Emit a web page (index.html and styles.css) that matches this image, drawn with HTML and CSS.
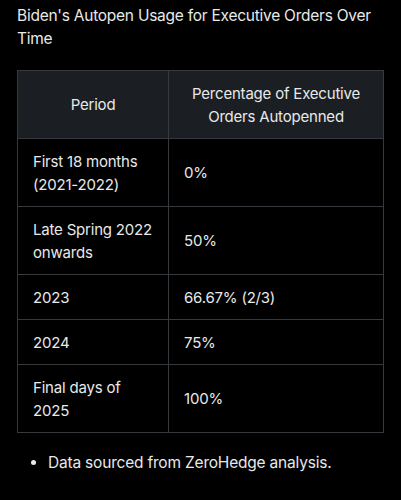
FILE: index.html
```html
<!DOCTYPE html>
<html lang="en">
<head>
    <meta charset="UTF-8">
    <meta name="viewport" content="width=device-width, initial-scale=1.0">
    <title>Autopen Usage</title>
    <link rel="stylesheet" href="styles.css">
</head>
<body>
    <div class="post">
        <p class="title">Biden's Autopen Usage for Executive Orders Over Time</p>

        <table class="data-table">
            <thead>
                <tr>
                    <th class="col-period">Period</th>
                    <th>Percentage of Executive Orders Autopenned</th>
                </tr>
            </thead>
            <tbody>
                <tr>
                    <td>First 18 months (2021-2022)</td>
                    <td>0%</td>
                </tr>
                <tr>
                    <td>Late Spring 2022 onwards</td>
                    <td>50%</td>
                </tr>
                <tr>
                    <td>2023</td>
                    <td>66.67% (2/3)</td>
                </tr>
                <tr>
                    <td>2024</td>
                    <td>75%</td>
                </tr>
                <tr>
                    <td>Final days of 2025</td>
                    <td>100%</td>
                </tr>
            </tbody>
        </table>

        <ul class="notes">
            <li>Data sourced from ZeroHedge analysis.</li>
        </ul>
    </div>
</body>
</html>
```

FILE: styles.css
```css
body {
    margin: 0;
    padding: 0;
    background-color: #000;
    color: #e7e9ea;
    font-family: Inter, "Noto Sans", sans-serif;
}

.post {
    padding: 4px 17px 0 17px;
}

.title {
    margin: 0;
    font-size: 15.5px;
    line-height: 23px;
    letter-spacing: -0.25px;
}

.data-table {
    margin-top: 20px;
    width: 100%;
    border-collapse: collapse;
    font-size: 15px;
    line-height: 23px;
    letter-spacing: -0.2px;
}

.data-table th,
.data-table td {
    border: 1px solid #36393d;
    padding: 10.5px 15px;
    text-align: left;
    vertical-align: middle;
}

.data-table th {
    background-color: #1b1e22;
    font-weight: normal;
    text-align: center;
}

.data-table .col-period,
.data-table td:first-child {
    width: 120px;
}

.notes {
    margin: 18px 0 0 0;
    padding-left: 31px;
    font-size: 15.5px;
    line-height: 24px;
    letter-spacing: -0.2px;
}
```
